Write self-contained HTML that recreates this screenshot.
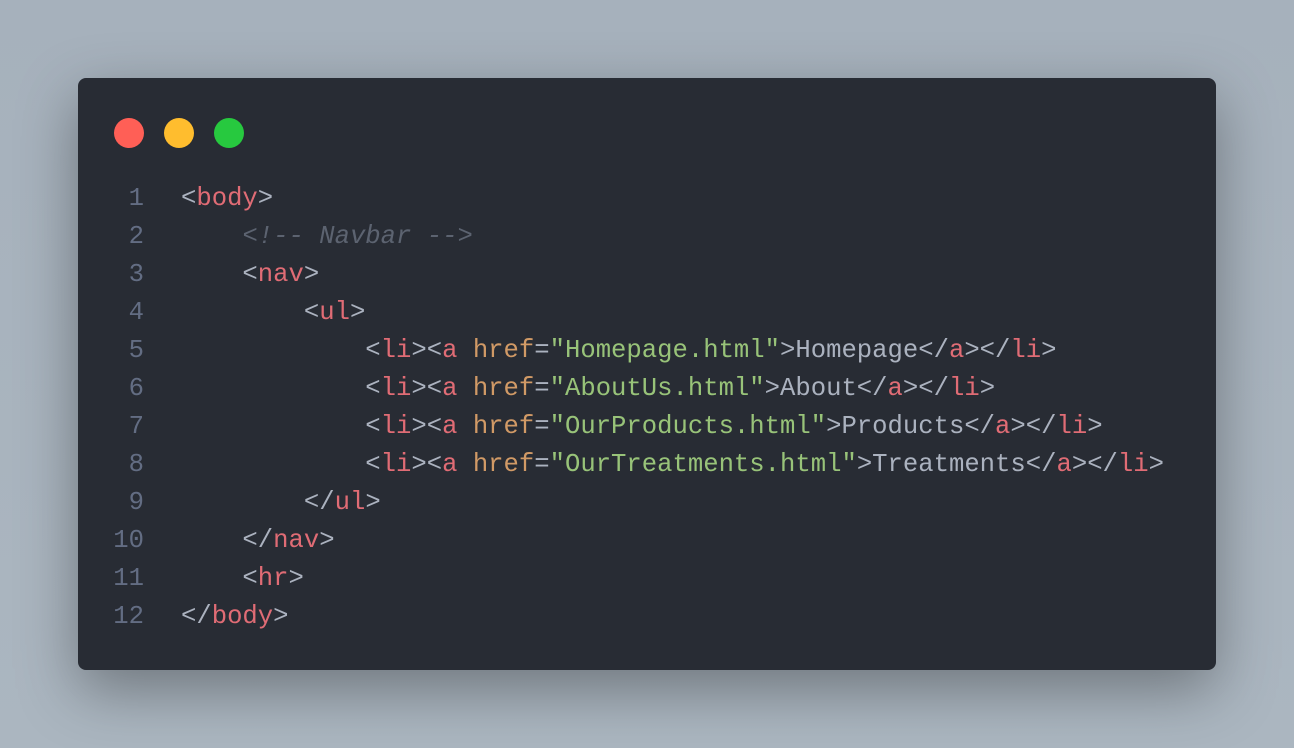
<!DOCTYPE html>
<html><head><style>
html,body{margin:0;padding:0;width:1294px;height:748px;overflow:hidden;background:linear-gradient(180deg,#a6b1bc,#abb6c0);}
.win{position:absolute;left:78px;top:78px;width:1138px;height:592px;background:#282c34;border-radius:8px;box-shadow:0 20px 60px rgba(0,0,0,0.35);}
.dot{position:absolute;top:40px;width:30px;height:30px;border-radius:50%;}
.code{position:absolute;left:0;top:102px;font-family:"Liberation Mono",monospace;font-size:25.6px;line-height:38px;color:#abb2bf;white-space:pre;}
.ln{display:inline-block;width:66px;text-align:right;color:#636d83;margin-right:37px;}
.t{color:#e06c75}.a{color:#d19a66}.s{color:#98c379}.c{color:#5c6370;font-style:italic}
</style></head><body>
<div class="win">
<div class="dot" style="left:36px;background:#ff5f56"></div>
<div class="dot" style="left:86px;background:#ffbd2e"></div>
<div class="dot" style="left:136px;background:#27c93f"></div>
<div class="code"><span class="ln">1</span>&lt;<span class="t">body</span>&gt;
<span class="ln">2</span>    <span class="c">&lt;!-- Navbar --&gt;</span>
<span class="ln">3</span>    &lt;<span class="t">nav</span>&gt;
<span class="ln">4</span>        &lt;<span class="t">ul</span>&gt;
<span class="ln">5</span>            &lt;<span class="t">li</span>&gt;&lt;<span class="t">a</span> <span class="a">href</span>=<span class="s">"Homepage.html"</span>&gt;Homepage&lt;/<span class="t">a</span>&gt;&lt;/<span class="t">li</span>&gt;
<span class="ln">6</span>            &lt;<span class="t">li</span>&gt;&lt;<span class="t">a</span> <span class="a">href</span>=<span class="s">"AboutUs.html"</span>&gt;About&lt;/<span class="t">a</span>&gt;&lt;/<span class="t">li</span>&gt;
<span class="ln">7</span>            &lt;<span class="t">li</span>&gt;&lt;<span class="t">a</span> <span class="a">href</span>=<span class="s">"OurProducts.html"</span>&gt;Products&lt;/<span class="t">a</span>&gt;&lt;/<span class="t">li</span>&gt;
<span class="ln">8</span>            &lt;<span class="t">li</span>&gt;&lt;<span class="t">a</span> <span class="a">href</span>=<span class="s">"OurTreatments.html"</span>&gt;Treatments&lt;/<span class="t">a</span>&gt;&lt;/<span class="t">li</span>&gt;
<span class="ln">9</span>        &lt;/<span class="t">ul</span>&gt;
<span class="ln">10</span>    &lt;/<span class="t">nav</span>&gt;
<span class="ln">11</span>    &lt;<span class="t">hr</span>&gt;
<span class="ln">12</span>&lt;/<span class="t">body</span>&gt;</div>
</div>
</body></html>
